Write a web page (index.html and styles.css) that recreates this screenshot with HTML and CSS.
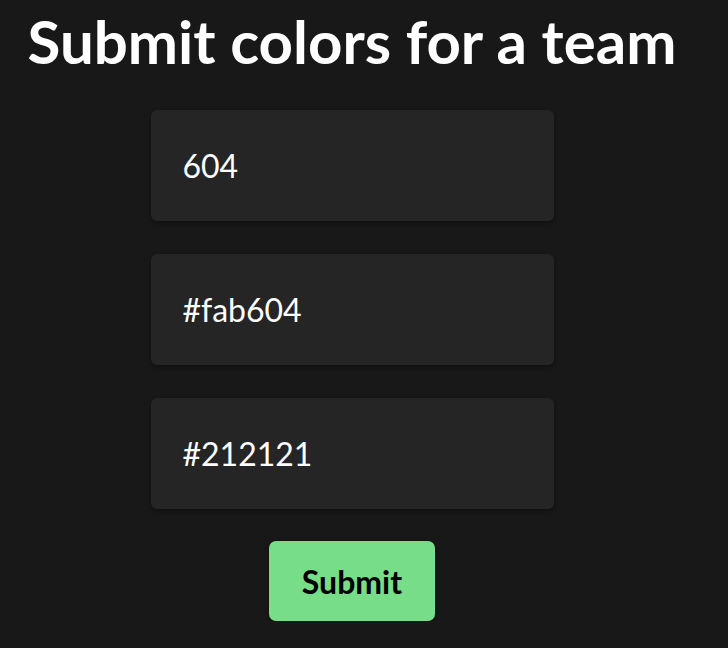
FILE: index.html
```html
<!DOCTYPE html>
<html lang="en">
<head>
<meta charset="utf-8">
<title>Submit colors</title>
<link rel="stylesheet" href="styles.css">
</head>
<body>
<main class="page">
  <h1 class="title">Submit colors for a team</h1>
  <form class="form">
    <input class="field" type="text" value="604">
    <input class="field" type="text" value="#fab604">
    <input class="field" type="text" value="#212121">
    <button class="submit" type="button">Submit</button>
  </form>
</main>
</body>
</html>
```
FILE: styles.css
```css
html, body {
  margin: 0;
  padding: 0;
  background: #181818;
}
body {
  font-family: Lato, "Open Sans", sans-serif;
  color: #ffffff;
}
.page {
  width: 704px;
  display: flex;
  flex-direction: column;
  align-items: center;
}
.title {
  margin: 5px 0 0;
  font-size: 60px;
  font-weight: 700;
  line-height: 72px;
  white-space: nowrap;
}
.form {
  margin-top: 33px;
  display: flex;
  flex-direction: column;
  align-items: center;
  gap: 33px;
}
.field {
  box-sizing: border-box;
  width: 403px;
  height: 111px;
  padding: 0 32px;
  border: none;
  border-radius: 6px;
  background: #252525;
  color: #ffffff;
  font-family: Lato, "Open Sans", sans-serif;
  font-size: 32px;
  box-shadow: 0 2px 4px rgba(0, 0, 0, 0.35);
  outline: none;
}
.submit {
  margin-top: -1px;
  box-sizing: border-box;
  width: 166px;
  height: 80px;
  border: none;
  border-radius: 7px;
  background: #77dd88;
  color: #000000;
  font-family: Lato, "Open Sans", sans-serif;
  font-size: 32px;
  font-weight: 700;
  box-shadow: 0 2px 5px rgba(0, 0, 0, 0.45);
  cursor: pointer;
}
```
